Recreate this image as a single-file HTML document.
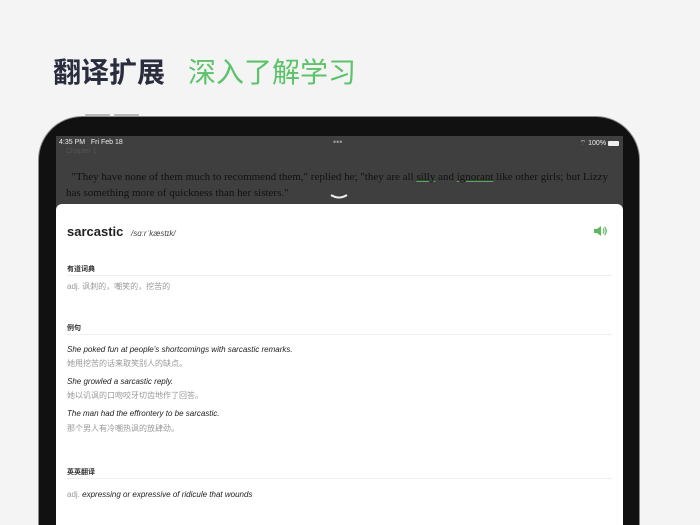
<!DOCTYPE html>
<html><head><meta charset="utf-8"><style>
*{margin:0;padding:0;box-sizing:border-box}
html,body{width:700px;height:525px;overflow:hidden}
body{background:#f4f4f4;position:relative;font-family:"Liberation Sans","Noto Sans CJK SC",sans-serif}
.t{position:absolute;top:55px;font-size:28px;font-weight:bold;line-height:36px}
.bez{position:absolute;left:38px;top:116px;width:602px;height:409px;background:#111;border-radius:44px 44px 0 0;border:1px solid #888;border-bottom:none}
.btn{position:absolute;top:114px;height:3px;background:#bbb;border-radius:1px}
.scr{position:absolute;left:56px;top:136px;width:567px;height:389px;background:#3f3f3f;overflow:hidden}
.sb{position:absolute;top:3px;font-size:7px;color:#eee}
.bk{position:absolute;left:10px;font-family:"Liberation Serif",serif;font-size:11px;color:#111;white-space:nowrap}
.sh{position:absolute;left:0;top:68px;width:567px;height:321px;background:#fff;border-radius:6px 6px 0 0}
.a{position:absolute;left:11px;white-space:nowrap}
.lab{font-size:7px;font-weight:bold;color:#333}
.ln{position:absolute;left:11px;width:545px;height:1px;background:#eee}
.en{font-size:8px;font-style:italic;color:#222}
.zh{font-size:8px;color:#999}
</style></head><body>
<div class="t" style="left:53px;color:#2a2d3e">翻译扩展</div>
<div class="t" style="left:188px;color:#5cc36a;font-weight:normal">深入了解学习</div>
<div class="btn" style="left:85px;width:25px"></div>
<div class="btn" style="left:114px;width:25px"></div>
<div class="bez"></div>
<div class="scr">
 <div class="sb" style="left:3px">4:35 PM&nbsp;&nbsp; Fri Feb 18</div>
 <div class="sb" style="left:277px;top:1px;font-size:9px;color:#999">•••</div>
 <div class="sb" style="right:4px">⌔ 100% <span style="display:inline-block;width:11px;height:5px;background:#eee;border-radius:1px;vertical-align:middle"></span></div>
 <div class="bk" style="top:12px;font-size:7px;color:#555;font-family:'Liberation Sans',sans-serif">Chapter 1</div>
 <div class="bk" style="top:35px">&nbsp;&nbsp;"They have none of them much to recommend them," replied he; "they are all <u style="text-decoration-color:#5a5">silly</u> and <u style="text-decoration-color:#5a5">ignorant</u> like other girls; but Lizzy</div>
 <div class="bk" style="top:51px">has something more of quickness than her sisters."</div>
 <svg style="position:absolute;left:274px;top:58px" width="18" height="6"><path d="M1 1 Q9 6 17 1" stroke="#eee" stroke-width="2" fill="none"/></svg>
 <div class="sh">
  <div class="a" style="top:20px;font-size:13px;font-weight:bold;color:#222">sarcastic <span style="font-size:8px;font-weight:normal;font-style:italic;color:#444;margin-left:4px">/sɑːrˈkæstɪk/</span></div>
  <svg style="position:absolute;left:537px;top:21px" width="14" height="12"><path d="M1 4h3l4-3v10l-4-3H1z" fill="#5cb85c"/><path d="M10 3.5q2 2.5 0 5M11.5 2q3.5 4 0 8" stroke="#5cb85c" fill="none" stroke-width="1.2"/></svg>
  <div class="a lab" style="top:60px">有道词典</div><div class="ln" style="top:71px"></div>
  <div class="a zh" style="top:77px">adj. 讽刺的，嘲笑的，挖苦的</div>
  <div class="a lab" style="top:119px">例句</div><div class="ln" style="top:130px"></div>
  <div class="a en" style="top:141px">She poked fun at people's shortcomings with sarcastic remarks.</div>
  <div class="a zh" style="top:154px">她用挖苦的话来取笑别人的缺点。</div>
  <div class="a en" style="top:173px">She growled a sarcastic reply.</div>
  <div class="a zh" style="top:186px">她以讥讽的口吻咬牙切齿地作了回答。</div>
  <div class="a en" style="top:205px">The man had the effrontery to be sarcastic.</div>
  <div class="a zh" style="top:219px">那个男人有冷嘲热讽的放肆劲。</div>
  <div class="a lab" style="top:263px">英英翻译</div><div class="ln" style="top:274px"></div>
  <div class="a en" style="top:286px"><span style="font-style:normal;color:#999">adj.</span> expressing or expressive of ridicule that wounds</div>
 </div>
</div>
</body></html>
